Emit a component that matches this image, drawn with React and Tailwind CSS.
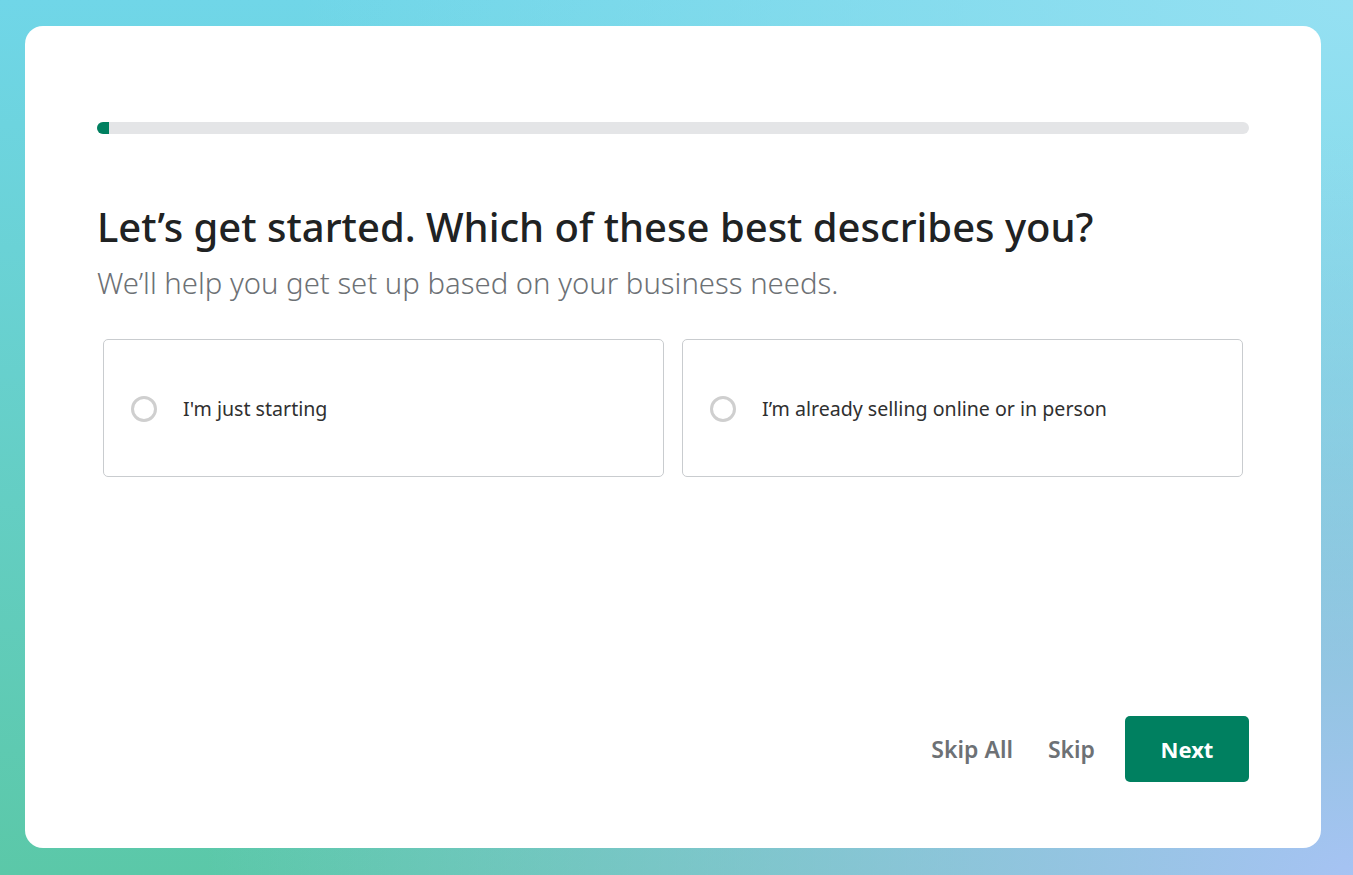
import React from 'react';

function Option({ label }) {
  return (
    <label className="flex h-[138px] cursor-pointer items-center rounded-[5px] border border-[#c9cccf] bg-white pl-[27px]">
      <span className="mt-[2px] h-[26px] w-[26px] shrink-0 rounded-full border-[3px] border-[#cfcfcf]" />
      <span className="mt-[2px] ml-[26px] text-[19.6px] text-[#303030]">{label}</span>
    </label>
  );
}

export default function App() {
  return (
    <div
      className="min-h-[875px] w-full overflow-hidden pt-[26px] pl-[25px] bg-[radial-gradient(ellipse_at_100%_100%,#a6c3f3_0%,rgba(166,195,243,0)_60%),radial-gradient(ellipse_at_100%_0%,#95e0f2_0%,rgba(149,224,242,0)_55%),linear-gradient(to_bottom,#70d6e8,#5bc8a8)]"
      style={{ fontFamily: '"Noto Sans", "Open Sans", sans-serif' }}
    >
      <div className="flex h-[822px] w-[1296px] flex-col rounded-[18px] bg-white px-[72px] pt-[96px] pb-[66px]">
        <div className="h-[12px] w-full overflow-hidden rounded-full bg-[#e4e5e7]">
          <div className="h-[12px] w-[12px] bg-[#008060]" />
        </div>

        <h1 className="mt-[69px] text-[40px] leading-[48px] font-medium text-[#202223]">
          Let’s get started. Which of these best describes you?
        </h1>
        <p className="mt-[14px] text-[29.3px] leading-[36px] font-light text-[#6d7175]">
          We’ll help you get set up based on your business needs.
        </p>

        <div className="mt-[38px] grid grid-cols-2 gap-[18px] px-[6px]">
          <Option label="I'm just starting" />
          <Option label="I’m already selling online or in person" />
        </div>

        <div className="mt-auto flex items-center justify-end">
          <button className="text-[23px] font-semibold text-[#6d7175]">Skip All</button>
          <button className="ml-[35px] text-[23px] font-semibold text-[#6d7175]">Skip</button>
          <button className="ml-[30px] h-[66px] w-[124px] rounded-[5px] bg-[#008060] text-[22px] font-bold text-white">
            Next
          </button>
        </div>
      </div>
    </div>
  );
}
